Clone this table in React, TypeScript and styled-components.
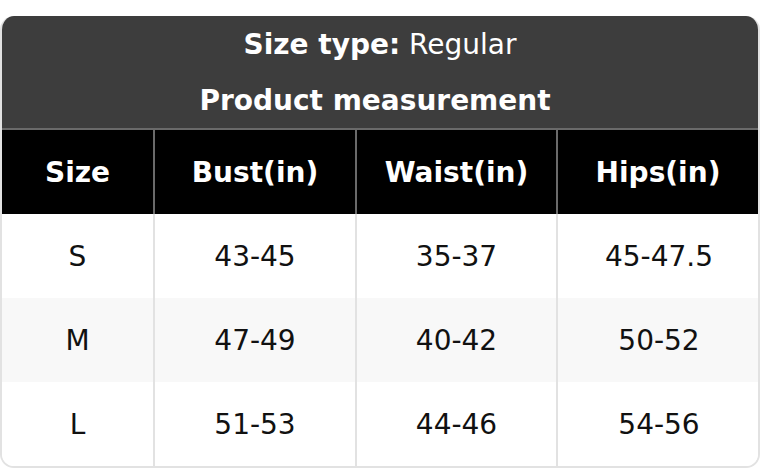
import React from 'react'
import styled, { createGlobalStyle } from 'styled-components'

const GlobalStyle = createGlobalStyle`
    html, body {
        margin: 0;
        padding: 0;
        background: #fff;
        font-family: 'DejaVu Sans', sans-serif;
    }
`

const rows = [
    { size: 'S', bust: '43-45', waist: '35-37', hips: '45-47.5' },
    { size: 'M', bust: '47-49', waist: '40-42', hips: '50-52' },
    { size: 'L', bust: '51-53', waist: '44-46', hips: '54-56' },
]

const headers = ['Size', 'Bust(in)', 'Waist(in)', 'Hips(in)']

function App() {
    return (
        <>
            <GlobalStyle />
            <Page>
                <Card>
                    <Header>
                        <HeaderLine>
                            <strong>Size type:</strong> Regular
                        </HeaderLine>
                        <HeaderLine $shift>
                            <strong>Product measurement</strong>
                        </HeaderLine>
                    </Header>
                    <Grid>
                        {headers.map((h) => (
                            <HeadCell key={h}>{h}</HeadCell>
                        ))}
                        {rows.map((r, i) => (
                            <React.Fragment key={r.size}>
                                <Cell $striped={i % 2 === 1}>{r.size}</Cell>
                                <Cell $striped={i % 2 === 1}>{r.bust}</Cell>
                                <Cell $striped={i % 2 === 1}>{r.waist}</Cell>
                                <Cell $striped={i % 2 === 1}>{r.hips}</Cell>
                            </React.Fragment>
                        ))}
                    </Grid>
                </Card>
            </Page>
        </>
    )
}

export default App

const Page = styled.div`
    padding-top: 16px;
    width: 760px;
`

const Card = styled.div`
    width: 760px;
    box-sizing: border-box;
    border-radius: 14px;
    overflow: hidden;
    border: 2px solid #e2e2e2;
    border-top: none;
`

const Header = styled.div`
    background: #3d3d3d;
    color: #fff;
    display: flex;
    flex-direction: column;
    border-bottom: 2px solid #6a6a6a;
    margin: 0 -2px;
`

const HeaderLine = styled.div<{ $shift?: boolean }>`
    height: 56px;
    display: flex;
    align-items: center;
    justify-content: center;
    font-size: 28px;
    white-space: pre;
    padding-right: ${(p) => (p.$shift ? '10px' : '0')};
    strong {
        font-weight: 700;
    }
`

const Grid = styled.div`
    display: grid;
    grid-template-columns: 151px 202px 201px 1fr;
    margin-left: -2px;
    margin-right: -2px;
    padding-left: 2px;
`

const HeadCell = styled.div`
    height: 84px;
    display: flex;
    align-items: center;
    justify-content: center;
    background: #000;
    color: #fff;
    font-size: 28px;
    font-weight: 700;
    & + & {
        border-left: 2px solid #6a6a6a;
    }
    &:first-child {
        margin-left: -2px;
        padding-left: 2px;
    }
    &:nth-child(4) {
        margin-right: -2px;
        padding-right: 2px;
        border-right: 2px solid #6a6a6a;
    }
`

const Cell = styled.div<{ $striped: boolean }>`
    height: 84px;
    display: flex;
    align-items: center;
    justify-content: center;
    background: ${(p) => (p.$striped ? '#f8f8f8' : '#fff')};
    color: #111;
    font-size: 28px;
    &:not(:nth-child(4n + 1)) {
        border-left: 2px solid #e2e2e2;
    }
`
